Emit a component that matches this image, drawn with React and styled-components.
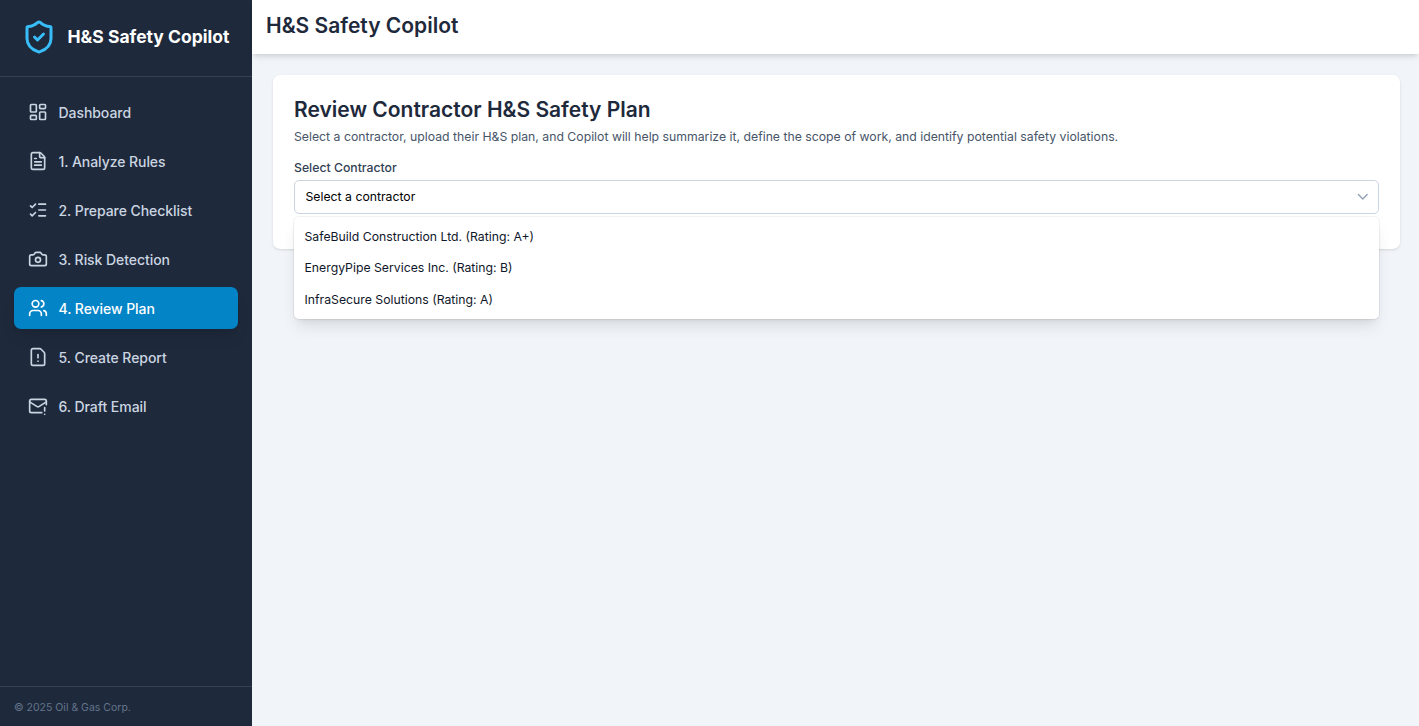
import React from "react";
import styled, { createGlobalStyle } from "styled-components";
import {
  LayoutDashboard,
  FileText,
  ListChecks,
  Camera,
  Users,
  FileWarning,
  MailWarning,
  ShieldCheck,
  ChevronDown,
} from "lucide-react";

const GlobalStyle = createGlobalStyle`
  *, *::before, *::after { box-sizing: border-box; }
  body {
    margin: 0;
    font-family: Inter, "Liberation Sans", sans-serif;
    line-height: 1.5;
    color: #1e293b;
  }
  h1, h2, p { margin: 0; }
`;

const Shell = styled.div`
  display: flex;
  height: 100vh;
  overflow: hidden;
  background: #f1f5f9;
`;

const Sidebar = styled.aside`
  width: 252px;
  flex: none;
  display: flex;
  flex-direction: column;
  background: #1e293b;
  color: #cbd5e1;
`;

const Brand = styled.div`
  height: 77px;
  display: flex;
  align-items: center;
  gap: 10.5px;
  padding: 0 21px 2px;
  border-bottom: 1px solid #334155;
  color: #fff;
  font-size: 17.5px;
  font-weight: 700;
  line-height: 24.5px;
  white-space: nowrap;
  svg { color: #38bdf8; flex: none; }
`;

const Nav = styled.nav`
  flex: 1;
  display: flex;
  flex-direction: column;
  gap: 7px;
  padding: 14px;
`;

const NavItem = styled.a`
  height: 42px;
  display: flex;
  align-items: center;
  gap: 10.5px;
  padding: 0 14px;
  border-radius: 7px;
  font-size: 14px;
  font-weight: 500;
  letter-spacing: -0.06px;
  color: ${(p) => (p.$active ? "#fff" : "#cbd5e1")};
  background: ${(p) => (p.$active ? "#0284c7" : "transparent")};
  box-shadow: ${(p) => (p.$active ? "0 10px 15px -3px rgba(0,0,0,.1), 0 4px 6px -4px rgba(0,0,0,.1)" : "none")};
`;

const SidebarFooter = styled.footer`
  height: 40px;
  display: flex;
  align-items: center;
  padding: 2px 14px 0;
  border-top: 1px solid #334155;
  font-size: 10.5px;
  color: #64748b;
`;

const Main = styled.main`
  flex: 1;
  min-width: 0;
  display: flex;
  flex-direction: column;
`;

const TopBar = styled.header`
  height: 54px;
  flex: none;
  display: flex;
  align-items: center;
  padding: 0 14px 2px;
  background: #fff;
  box-shadow: 0 4px 6px -1px rgba(0,0,0,.1), 0 2px 4px -2px rgba(0,0,0,.1);
`;

const Title = styled.h1`
  font-size: 21px;
  font-weight: 600;
  line-height: 28px;
`;

const Content = styled.div`
  flex: 1;
  padding: 21px 19px 21px 21px;
`;

const Card = styled.section`
  height: 174px;
  padding: 21px;
  background: #fff;
  border-radius: 7px;
  box-shadow: 0 1px 3px rgba(0,0,0,.1), 0 1px 2px -1px rgba(0,0,0,.1);
`;

const CardTitle = styled.h2`
  font-size: 21px;
  font-weight: 600;
  line-height: 28px;
`;

const Description = styled.p`
  margin-top: 3.5px;
  font-size: 12.25px;
  line-height: 17.5px;
  color: #475569;
`;

const FieldLabel = styled.label`
  display: block;
  margin-top: 14px;
  margin-bottom: 3.5px;
  font-size: 12.25px;
  font-weight: 500;
  line-height: 17.5px;
  color: #334155;
`;

const SelectBox = styled.div`
  position: relative;
`;

const SelectTrigger = styled.button`
  width: 100%;
  height: 34px;
  display: flex;
  align-items: center;
  justify-content: space-between;
  padding: 0 7px 0 10.5px;
  border: 1px solid #cbd5e1;
  border-radius: 5px;
  background: #fff;
  color: #000;
  font: 400 12.25px/17.5px Inter, sans-serif;
  svg { color: #94a3b8; }
`;

const Menu = styled.div`
  position: absolute;
  top: 37px;
  left: 0;
  right: 0;
  padding: 3.5px 0;
  background: #fff;
  border-radius: 5px;
  box-shadow: 0 10px 15px -3px rgba(0,0,0,.1), 0 4px 6px -4px rgba(0,0,0,.1), 0 0 0 1px rgba(0,0,0,.05);
`;

const Option = styled.div`
  padding: 7px 10.5px;
  font-size: 12.25px;
  line-height: 17.5px;
  color: #0f172a;
`;

const navItems = [
  { label: "Dashboard", icon: LayoutDashboard },
  { label: "1. Analyze Rules", icon: FileText },
  { label: "2. Prepare Checklist", icon: ListChecks },
  { label: "3. Risk Detection", icon: Camera },
  { label: "4. Review Plan", icon: Users, active: true },
  { label: "5. Create Report", icon: FileWarning },
  { label: "6. Draft Email", icon: MailWarning },
];

const contractors = [
  "SafeBuild Construction Ltd. (Rating: A+)",
  "EnergyPipe Services Inc. (Rating: B)",
  "InfraSecure Solutions (Rating: A)",
];

export default function App() {
  return (
    <Shell>
      <GlobalStyle />
      <Sidebar>
        <Brand>
          <ShieldCheck size={36} />
          <span>H&amp;S Safety Copilot</span>
        </Brand>
        <Nav>
          {navItems.map(({ label, icon: Icon, active }) => (
            <NavItem key={label} $active={active}>
              <Icon size={20} strokeWidth={2} />
              <span>{label}</span>
            </NavItem>
          ))}
        </Nav>
        <SidebarFooter>© 2025 Oil &amp; Gas Corp.</SidebarFooter>
      </Sidebar>
      <Main>
        <TopBar>
          <Title>H&amp;S Safety Copilot</Title>
        </TopBar>
        <Content>
          <Card>
            <CardTitle>Review Contractor H&amp;S Safety Plan</CardTitle>
            <Description>
              Select a contractor, upload their H&amp;S plan, and Copilot will help summarize it, define the scope of work, and identify potential safety violations.
            </Description>
            <FieldLabel>Select Contractor</FieldLabel>
            <SelectBox>
              <SelectTrigger type="button">
                <span>Select a contractor</span>
                <ChevronDown size={17.5} />
              </SelectTrigger>
              <Menu>
                {contractors.map((name) => (
                  <Option key={name}>{name}</Option>
                ))}
              </Menu>
            </SelectBox>
          </Card>
        </Content>
      </Main>
    </Shell>
  );
}
